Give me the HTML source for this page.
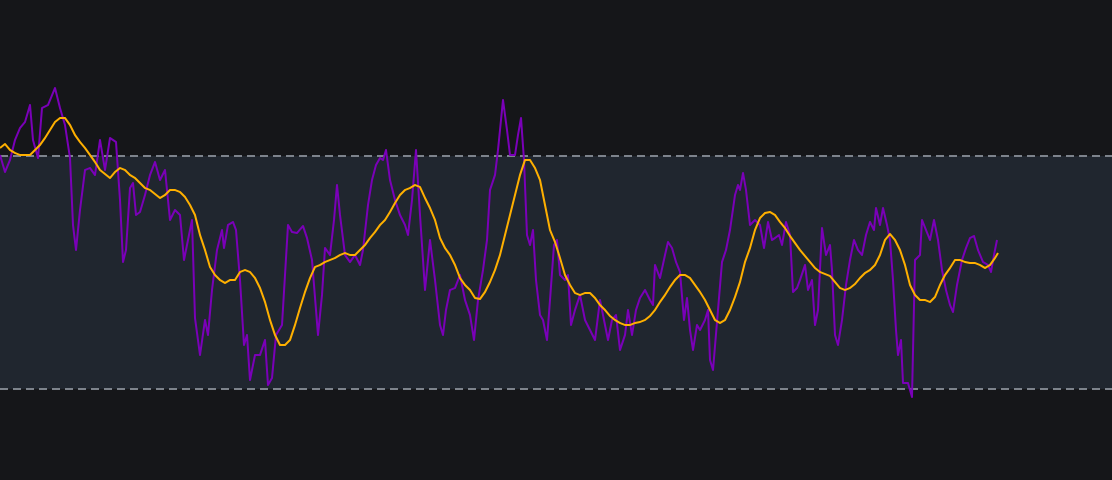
<!DOCTYPE html>
<html><head><style>html,body{margin:0;padding:0;background:#151619;}svg{display:block}</style></head>
<body>
<svg width="1112" height="480" viewBox="0 0 1112 480" xmlns="http://www.w3.org/2000/svg">
<rect width="1112" height="480" fill="#151619"/>
<rect x="0" y="156" width="1112" height="233" fill="#20262f"/>
<line x1="0" y1="156" x2="1112" y2="156" stroke="#7d838c" stroke-width="2" stroke-dasharray="8,5"/>
<line x1="0" y1="389" x2="1112" y2="389" stroke="#7d838c" stroke-width="2" stroke-dasharray="8,5"/>
<polyline fill="none" stroke="#7a00b8" stroke-width="2" stroke-linejoin="round" points="0,155 5,172 10,160 15,140 20,128 25,122 30,105 33,140 38,158 42,108 48,105 55,88 60,108 65,125 70,158 73,225 76,250 80,210 85,170 90,168 95,175 100,140 105,170 110,138 116,142 120,200 123,262 126,250 130,188 133,183 136,215 140,212 145,195 150,175 155,162 160,180 165,170 170,220 175,210 180,215 184,260 188,240 192,220 195,318 200,355 205,320 208,335 212,290 217,250 222,230 224,248 228,225 233,222 236,230 240,280 244,345 247,335 250,380 255,355 260,355 265,340 268,385 272,378 276,335 282,325 288,225 292,232 297,233 303,226 307,238 312,260 318,335 322,295 325,248 330,255 334,220 337,185 340,215 345,255 350,262 355,255 360,265 363,250 368,205 372,180 376,165 380,158 383,160 386,150 390,180 395,200 400,215 405,225 408,235 412,200 416,150 420,215 425,290 430,240 435,280 440,325 443,335 446,310 450,290 455,288 460,275 465,300 470,315 474,340 478,300 483,270 487,240 490,190 495,175 498,150 503,100 507,130 510,155 515,155 518,135 521,118 524,160 527,235 530,245 533,230 536,280 540,315 543,320 547,340 550,300 554,245 557,240 560,275 565,280 568,275 571,325 575,310 580,295 585,320 590,330 595,340 600,300 605,325 608,340 612,320 616,315 620,350 625,335 628,310 632,335 636,310 640,298 645,290 650,300 653,305 655,265 660,278 665,255 668,242 672,248 676,262 680,272 684,320 687,298 690,330 693,350 697,325 700,330 705,320 708,310 710,360 713,370 718,310 722,262 726,250 730,230 735,195 738,185 740,190 743,173 746,190 750,225 755,220 760,225 764,248 768,222 772,240 775,238 779,235 782,245 786,222 790,235 793,292 797,288 800,280 805,265 808,290 812,280 815,325 818,310 822,228 826,255 830,245 832,270 835,335 838,345 842,320 846,285 850,260 854,240 858,250 862,255 866,235 870,222 874,230 876,208 880,225 883,208 887,225 890,240 893,280 896,330 898,355 901,340 903,383 908,383 912,397 915,260 920,255 922,220 926,230 930,240 934,220 938,240 942,270 946,290 950,305 953,312 957,285 962,260 966,248 970,238 974,236 978,250 983,262 988,265 991,272 994,255 997,240"/>
<polyline fill="none" stroke="#ffb000" stroke-width="2" stroke-linejoin="round" points="0,148 5,144 10,150 15,153 20,155 30,155 35,150 40,145 45,138 50,130 55,122 60,118 65,118 70,125 75,135 80,142 85,148 90,155 95,162 100,170 105,174 110,178 115,172 120,168 125,170 130,175 135,178 140,183 145,188 150,190 155,194 160,198 165,195 170,190 175,190 180,192 185,197 190,205 195,215 200,235 205,250 210,267 215,275 220,280 225,283 230,280 235,280 240,272 245,270 250,272 255,278 260,288 265,302 270,320 275,335 280,345 285,345 290,340 295,325 300,308 305,292 310,278 315,267 320,265 325,262 330,260 335,258 340,255 345,253 350,255 355,255 360,250 365,245 370,238 375,232 380,225 385,220 390,212 395,203 400,195 405,190 410,188 415,185 420,187 425,198 430,208 435,220 440,238 445,248 450,255 455,265 460,278 465,285 470,290 475,298 480,299 485,292 490,282 495,270 500,255 505,235 510,215 515,195 520,175 525,160 530,160 535,168 540,180 545,205 550,230 555,242 560,258 565,275 570,285 575,293 580,295 585,293 590,293 595,298 600,305 605,310 610,316 615,320 620,323 625,325 630,325 635,323 640,322 645,320 650,316 655,310 660,302 665,295 670,287 675,280 680,275 685,275 690,278 695,285 700,292 705,300 710,310 715,320 720,323 725,320 730,310 735,297 740,282 745,262 750,248 755,230 760,218 765,213 770,212 775,215 780,222 785,228 790,236 795,243 800,250 805,256 810,262 815,268 820,272 825,274 830,276 835,282 840,288 845,290 850,288 855,284 860,278 865,273 870,270 875,265 880,255 885,240 890,234 895,240 900,250 905,265 910,285 915,295 920,300 925,300 930,302 935,297 940,285 945,275 950,268 955,260 960,260 965,262 970,263 975,263 980,265 985,268 990,265 995,258 998,253"/>
</svg>
</body></html>
